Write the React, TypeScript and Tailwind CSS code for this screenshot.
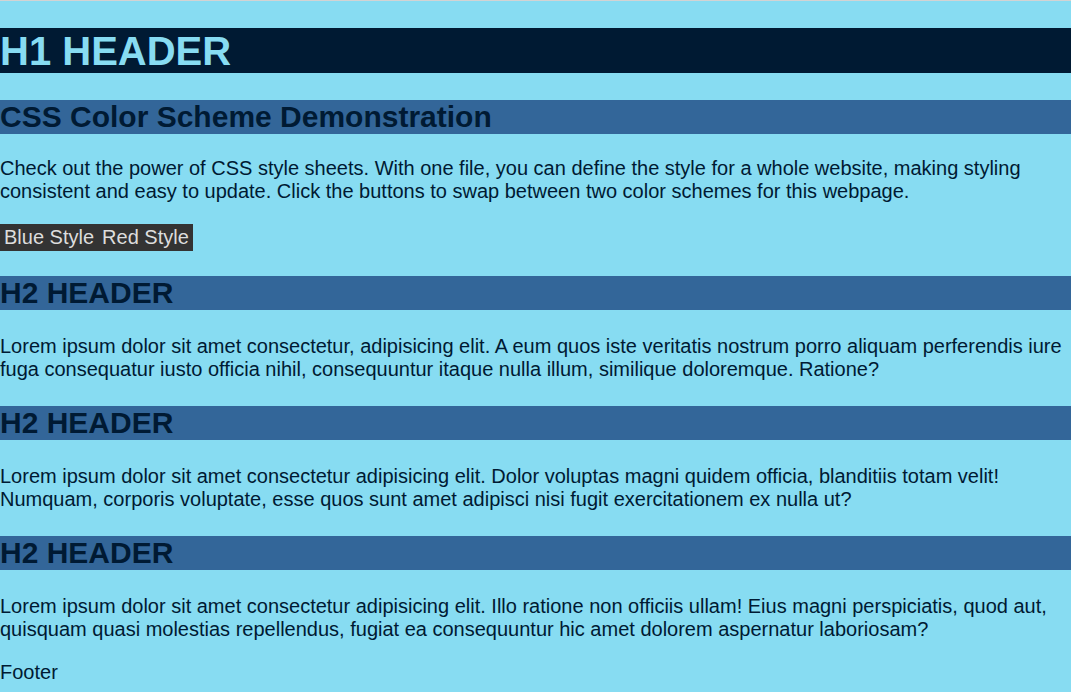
import React from 'react';

const sections = [
  'Lorem ipsum dolor sit amet consectetur, adipisicing elit. A eum quos iste veritatis nostrum porro aliquam perferendis iure fuga consequatur iusto officia nihil, consequuntur itaque nulla illum, similique doloremque. Ratione?',
  'Lorem ipsum dolor sit amet consectetur adipisicing elit. Dolor voluptas magni quidem officia, blanditiis totam velit! Numquam, corporis voluptate, esse quos sunt amet adipisci nisi fugit exercitationem ex nulla ut?',
  'Lorem ipsum dolor sit amet consectetur adipisicing elit. Illo ratione non officiis ullam! Eius magni perspiciatis, quod aut, quisquam quasi molestias repellendus, fugiat ea consequuntur hic amet dolorem aspernatur laboriosam?',
];

export default function App() {
  return (
    <div
      className="min-h-[692px] bg-[#87dcf2] text-[#001a33] border-t border-[#d3d3d3]"
      style={{ fontFamily: '"Liberation Sans", Arial, sans-serif' }}
    >
      <h1 className="mt-[27px] h-[45px] bg-[#001a33] text-[#87dcf2] text-[40px] font-bold leading-[46px]">
        H1 HEADER
      </h1>

      <h2 className="mt-[27px] h-[34px] bg-[#336699] text-[30px] font-bold leading-[34px]">
        CSS Color Scheme Demonstration
      </h2>
      <p className="mt-[23px] text-[20px] leading-[23px]">
        Check out the power of CSS style sheets. With one file, you can define the style for a whole
        website, making styling consistent and easy to update. Click the buttons to swap between two
        color schemes for this webpage.
      </p>
      <div className="mt-[21px] flex">
        <button className="bg-[#333333] text-[#dddddd] text-[20px] leading-[23px] px-1 py-[2px]">
          Blue Style
        </button>
        <button className="bg-[#333333] text-[#dddddd] text-[20px] leading-[23px] px-1 py-[2px]">
          Red Style
        </button>
      </div>

      {sections.map((text, i) => (
        <section key={i} className="mt-[25px]">
          <h2 className="h-[34px] bg-[#336699] text-[30px] font-bold leading-[34px]">H2 HEADER</h2>
          <p className="mt-[25px] text-[20px] leading-[23px]">{text}</p>
        </section>
      ))}

      <footer className="mt-[20px] pb-[8px] text-[20px] leading-[23px]">
        <p>Footer</p>
      </footer>
    </div>
  );
}
